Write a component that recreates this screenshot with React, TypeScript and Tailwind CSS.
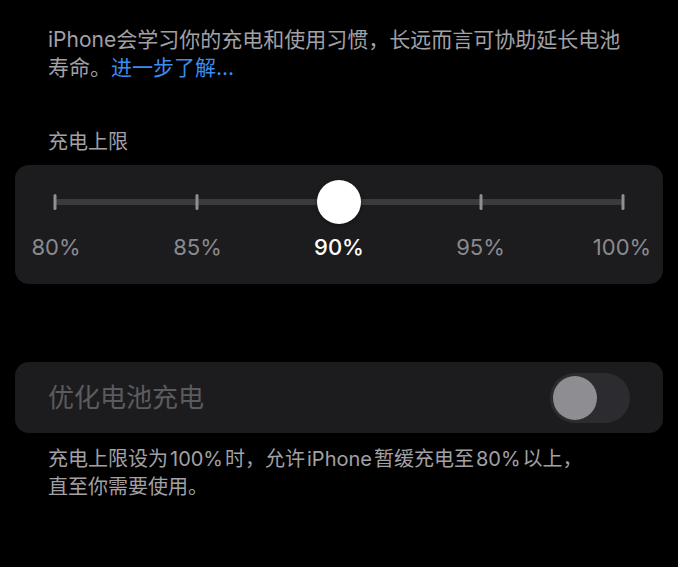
import React from 'react';

const ticks = ['80%', '85%', '90%', '95%', '100%'];
const selected = 2;

function LimitSlider() {
  return (
    <div className="mx-[15px] rounded-[14px] bg-[#1c1c1e] pt-[15px] pb-[23px]">
      {/* track + ticks + thumb */}
      <div className="relative mx-[40px] h-[44px]">
        <div className="absolute left-0 right-0 top-[19px] h-[6px] rounded-full bg-[#3a3a3c]" />
        {ticks.map((t, i) => (
          <div
            key={t}
            className="absolute top-[14px] h-[16px] w-[3px] -translate-x-1/2 rounded-full bg-[#8e8e93]"
            style={{ left: `${(i / (ticks.length - 1)) * 100}%` }}
          />
        ))}
        <div
          className="absolute top-0 h-[44px] w-[44px] -translate-x-1/2 rounded-full bg-white shadow-[0_1px_4px_rgba(0,0,0,0.4)]"
          style={{ left: `${(selected / (ticks.length - 1)) * 100}%` }}
        />
      </div>
      {/* labels */}
      <div className="mx-[41px] mt-[9px] flex justify-between text-[22px] leading-[28px]">
        {ticks.map((t, i) => (
          <div key={t} className="flex w-0 justify-center">
            <span
              className={
                i === selected
                  ? 'whitespace-nowrap font-medium text-white'
                  : 'whitespace-nowrap text-[#8a8a8e]'
              }
            >
              {t}
            </span>
          </div>
        ))}
      </div>
    </div>
  );
}

function Toggle() {
  return (
    <div className="flex h-[50px] w-[80px] items-center rounded-full bg-[#2c2c30] px-[3px]">
      <div className="h-[44px] w-[44px] rounded-full bg-[#8e8e92]" />
    </div>
  );
}

const Gap = () => <span className="inline-block w-[2px]" />;

export default function App() {
  return (
    <div
      className="h-[567px] w-full overflow-hidden bg-black"
      style={{ fontFamily: 'Inter, "Noto Sans CJK SC", sans-serif' }}
    >
      <p className="px-[48px] pt-[26px] text-[21px] leading-[28px] text-[#a1a1a6]">
        iPhone会学习你的充电和使用习惯，长远而言可协助延长电池寿命。
        <span className="text-[#3a8ef0]">进一步了解...</span>
      </p>

      <div className="mt-[46px] px-[48px] text-[20px] leading-[28px] text-[#a1a1a6]">充电上限</div>

      <div className="mt-[9px]">
        <LimitSlider />
      </div>

      <div className="mx-[15px] mt-[78px] flex h-[71px] items-center justify-between rounded-[14px] bg-[#1c1c1e] pl-[33px] pr-[33px]">
        <span className="text-[26px] text-[#5b5b5f]">优化电池充电</span>
        <Toggle />
      </div>

      <p className="mt-[12px] px-[48px] text-[20px] leading-[28px] text-[#a1a1a6]">
        充电上限设为<Gap />100%<Gap />时，允许<Gap />iPhone<Gap />暂缓充电至<Gap />80%<Gap />以上，
        <br />
        直至你需要使用。
      </p>
    </div>
  );
}
